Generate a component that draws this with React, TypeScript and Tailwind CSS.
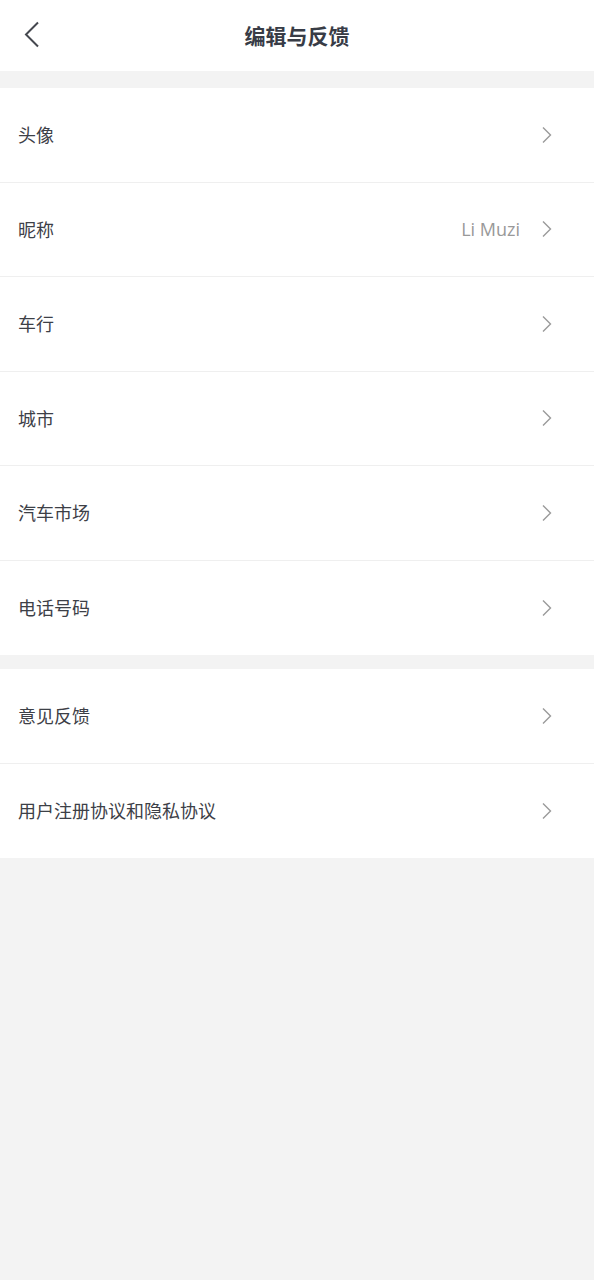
import React from 'react';

interface RowItem {
  label: string;
  value?: string;
}

const PROFILE_ROWS: RowItem[] = [
  { label: '头像' },
  { label: '昵称', value: 'Li Muzi' },
  { label: '车行' },
  { label: '城市' },
  { label: '汽车市场' },
  { label: '电话号码' },
];

const OTHER_ROWS: RowItem[] = [{ label: '意见反馈' }, { label: '用户注册协议和隐私协议' }];

const FONT = '"Noto Sans CJK SC", "Noto Sans", sans-serif';

function Chevron() {
  return (
    <svg width="12" height="18" viewBox="0 0 12 18" fill="none" className="shrink-0">
      <path d="M2 1.5 L9.5 9 L2 16.5" stroke="#9a9a9a" strokeWidth="1.4" />
    </svg>
  );
}

function Row({ item, last }: { item: RowItem; last: boolean }) {
  return (
    <div
      className={`flex h-[94.5px] items-center pl-[18px] pr-[41px] ${
        last ? '' : 'border-b border-[#efefef]'
      }`}
    >
      <span className="flex-1 text-[18px] text-[#3d4047]">{item.label}</span>
      {item.value && (
        <span className="mr-[21px] font-['Open_Sans',sans-serif] text-[18px] text-[#999]">
          {item.value}
        </span>
      )}
      <Chevron />
    </div>
  );
}

export default function App() {
  return (
    <div className="min-h-[1280px] bg-[#f3f3f3]" style={{ fontFamily: FONT }}>
      <header className="relative flex h-[71px] items-center justify-center bg-white">
        <svg
          width="16"
          height="28"
          viewBox="0 0 16 28"
          fill="none"
          className="absolute left-[24px] top-[21px]"
        >
          <path d="M14 1.5 L2 13.5 L14 25.5" stroke="#45484f" strokeWidth="2" />
        </svg>
        <h1 className="text-[21px] font-bold text-[#383c46]">编辑与反馈</h1>
      </header>

      <div className="mt-[17px] bg-white">
        {PROFILE_ROWS.map((item, i) => (
          <Row key={item.label} item={item} last={i === PROFILE_ROWS.length - 1} />
        ))}
      </div>

      <div className="mt-[14px] bg-white">
        {OTHER_ROWS.map((item, i) => (
          <Row key={item.label} item={item} last={i === OTHER_ROWS.length - 1} />
        ))}
      </div>
    </div>
  );
}
